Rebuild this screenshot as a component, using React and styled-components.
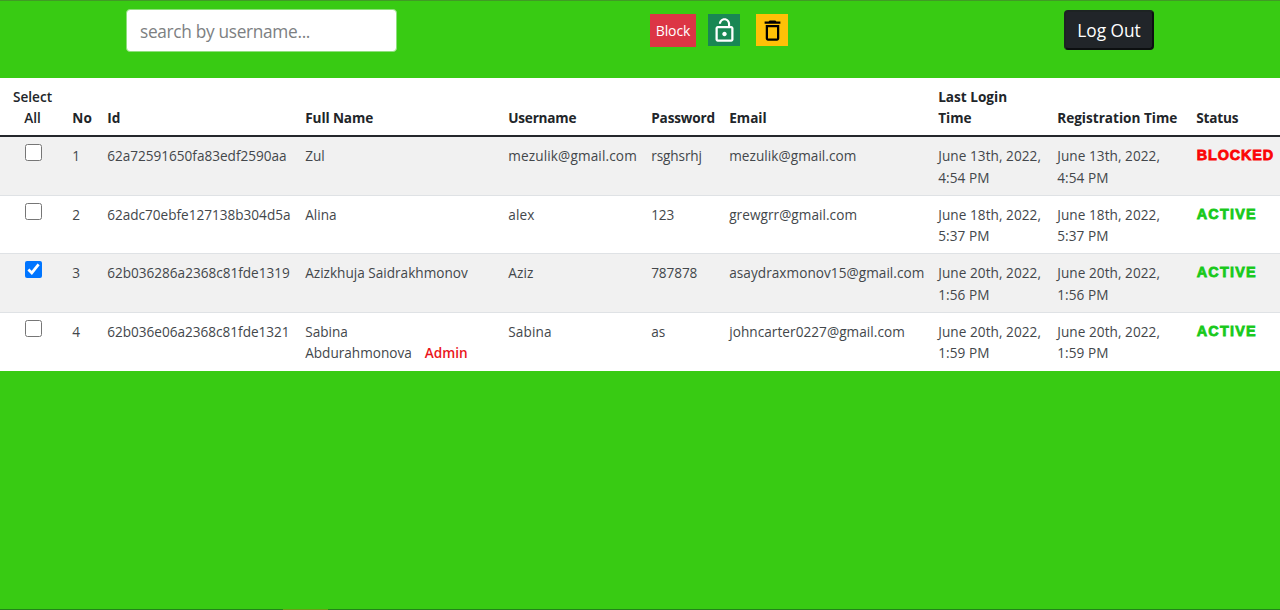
import React, { useState } from "react";
import styled, { createGlobalStyle } from "styled-components";
import { MdLockOpen, MdDeleteOutline } from "react-icons/md";

const GlobalStyle = createGlobalStyle`
  *, *::before, *::after { box-sizing: border-box; }
  body {
    margin: 0;
    background: #38cb13;
    color: #212529;
    font-family: "Open Sans", "Noto Sans", sans-serif;
    font-size: 13.6px;
    line-height: 21.6px;
  }
`;

const Page = styled.div`
  display: flex;
  flex-direction: column;
  height: 610px;
  overflow: hidden;
  border-top: 1px solid #419a26;
`;

const Toolbar = styled.header`
  display: flex;
  align-items: flex-start;
  height: 77px;
  padding: 8px 126px 0;
`;

const SearchInput = styled.input`
  width: 271px;
  height: 43px;
  padding: 1px 13px 0;
  border: 1px solid #8fe07d;
  border-radius: 4px;
  background: #fff;
  font-family: inherit;
  font-size: 17.3px;
  letter-spacing: -0.32px;
  outline: none;
  &::placeholder { color: #7d7f82; opacity: 1; }
`;

const Actions = styled.div`
  display: flex;
  gap: 12px;
  margin: 5px 0 0 253px;
`;

const ActionButton = styled.button`
  display: flex;
  align-items: center;
  justify-content: center;
  width: ${(p) => p.$width || 32}px;
  height: ${(p) => p.$height || 32}px;
  padding: 0;
  border: 0;
  background: ${(p) => p.$bg};
  color: ${(p) => p.$color};
  font: inherit;
  font-size: 14px;
  letter-spacing: -0.15px;
  & + & + & { margin-left: 4px; }
`;

const LogoutButton = styled.button`
  width: 90px;
  height: 40px;
  margin: 1px 0 0 auto;
  padding: 1px 0 0;
  border: 2px solid;
  border-color: #1d2323 #0c0f10 #0c0f10 #1d2323;
  border-radius: 4px;
  background: #212529;
  color: #fff;
  font-family: inherit;
  font-size: 17.3px;
`;

const Table = styled.table`
  width: 1280px;
  table-layout: fixed;
  border-spacing: 0;
  background: #fff;
`;

const Col = styled.col`
  width: ${(p) => p.$width}px;
`;

const HeadCell = styled.th`
  height: 58.5px;
  padding: ${(p) => (p.$center ? "7.5px 0 6.5px" : "7.5px 0 6.5px 7.2px")};
  border-bottom: 2px solid #24272b;
  text-align: ${(p) => (p.$center ? "center" : "left")};
  vertical-align: bottom;
  font-weight: ${(p) => (p.$center ? 600 : 700)};
  letter-spacing: ${(p) => p.$spacing || 0}px;
  white-space: pre-line;
`;

const Row = styled.tr`
  background: #fff;
  &:nth-child(odd) { background: #f1f1f1; }
`;

const Cell = styled.td`
  height: 58.5px;
  padding: ${(p) => (p.$center ? "7px 0 0 2px" : "8px 0 6px 7.2px")};
  border-bottom: 1px solid #dfe2e5;
  text-align: ${(p) => (p.$center ? "center" : "left")};
  vertical-align: top;
  color: #43474b;
  letter-spacing: ${(p) => p.$spacing || 0}px;
  white-space: pre-line;
  ${Row}:last-child & { border-bottom: 0; }
`;

const Checkbox = styled.input`
  display: block;
  width: 17px;
  height: 17px;
  margin: 0 auto;
  accent-color: #0075ff;
`;

const Admin = styled.span`
  margin-left: 13px;
  color: #ea1520;
  font-weight: 600;
`;

const Status = styled.span`
  display: block;
  padding-left: 0.5px;
  color: ${(p) => (p.$blocked ? "#fb0505" : "#18c91b")};
  font-family: "Liberation Sans", Arial, sans-serif;
  font-size: 14.4px;
  font-weight: 700;
  letter-spacing: ${(p) => (p.$blocked ? 0.9 : 1.25)}px;
  -webkit-text-stroke: 0.8px currentColor;
`;

const columns = [
  { label: "Select\nAll", width: 65, center: true },
  { label: "No", width: 35, spacing: 0.3 },
  { label: "Id", width: 198 },
  { label: "Full Name", width: 203, spacing: -0.1 },
  { label: "Username", width: 143, spacing: -0.2 },
  { label: "Password", width: 78, spacing: -0.15 },
  { label: "Email", width: 209 },
  { label: "Last Login\nTime", width: 119 },
  { label: "Registration Time", width: 139 },
  { label: "Status", width: 91, spacing: -0.15 },
];

const users = [
  { id: "62a72591650fa83edf2590aa", name: "Zul", username: "mezulik@gmail.com", password: "rsghsrhj", email: "mezulik@gmail.com", time: "June 13th, 2022,\n4:54 PM", status: "BLOCKED" },
  { id: "62adc70ebfe127138b304d5a", name: "Alina", username: "alex", password: "123", email: "grewgrr@gmail.com", time: "June 18th, 2022,\n5:37 PM", status: "ACTIVE" },
  { id: "62b036286a2368c81fde1319", name: "Azizkhuja Saidrakhmonov", username: "Aziz", password: "787878", email: "asaydraxmonov15@gmail.com", time: "June 20th, 2022,\n1:56 PM", status: "ACTIVE" },
  { id: "62b036e06a2368c81fde1321", name: "Sabina\nAbdurahmonova", username: "Sabina", password: "as", email: "johncarter0227@gmail.com", time: "June 20th, 2022,\n1:59 PM", status: "ACTIVE", admin: true },
];

const BottomEdge = styled.footer`
  height: 1px;
  margin-top: auto;
  padding-left: 283px;
  background: #22831a;
`;

const EdgeMark = styled.div`
  width: 45px;
  height: 1px;
  background: #6d9c18;
`;

export default function App() {
  const [selected, setSelected] = useState([users[2].id]);
  const toggle = (id) =>
    setSelected((s) => (s.includes(id) ? s.filter((x) => x !== id) : [...s, id]));

  return (
    <Page>
      <GlobalStyle />
      <Toolbar>
        <SearchInput placeholder="search by username..." />
        <Actions>
          <ActionButton $width={46} $height={33} $bg="#dc3545" $color="#fff">Block</ActionButton>
          <ActionButton $bg="#198754" $color="#fff" aria-label="Unblock"><MdLockOpen size={27} /></ActionButton>
          <ActionButton $bg="#ffc107" $color="#000" aria-label="Delete"><MdDeleteOutline size={27} /></ActionButton>
        </Actions>
        <LogoutButton>Log Out</LogoutButton>
      </Toolbar>
      <Table>
        <colgroup>
          {columns.map((c) => <Col key={c.label} $width={c.width} />)}
        </colgroup>
        <thead>
          <tr>
            {columns.map((c) => <HeadCell key={c.label} $center={c.center} $spacing={c.spacing}>{c.label}</HeadCell>)}
          </tr>
        </thead>
        <tbody>
          {users.map((u, i) => (
            <Row key={u.id}>
              <Cell $center>
                <Checkbox type="checkbox" checked={selected.includes(u.id)} onChange={() => toggle(u.id)} />
              </Cell>
              <Cell>{i + 1}</Cell>
              <Cell $spacing={-0.01}>{u.id}</Cell>
              <Cell>{u.name}{u.admin && <Admin>Admin</Admin>}</Cell>
              <Cell $spacing={0.14}>{u.username}</Cell>
              <Cell $spacing={-0.1}>{u.password}</Cell>
              <Cell $spacing={0.05}>{u.email}</Cell>
              <Cell $spacing={0.06}>{u.time}</Cell>
              <Cell $spacing={0.06}>{u.time}</Cell>
              <Cell><Status $blocked={u.status === "BLOCKED"}>{u.status}</Status></Cell>
            </Row>
          ))}
        </tbody>
      </Table>
      <BottomEdge><EdgeMark /></BottomEdge>
    </Page>
  );
}
